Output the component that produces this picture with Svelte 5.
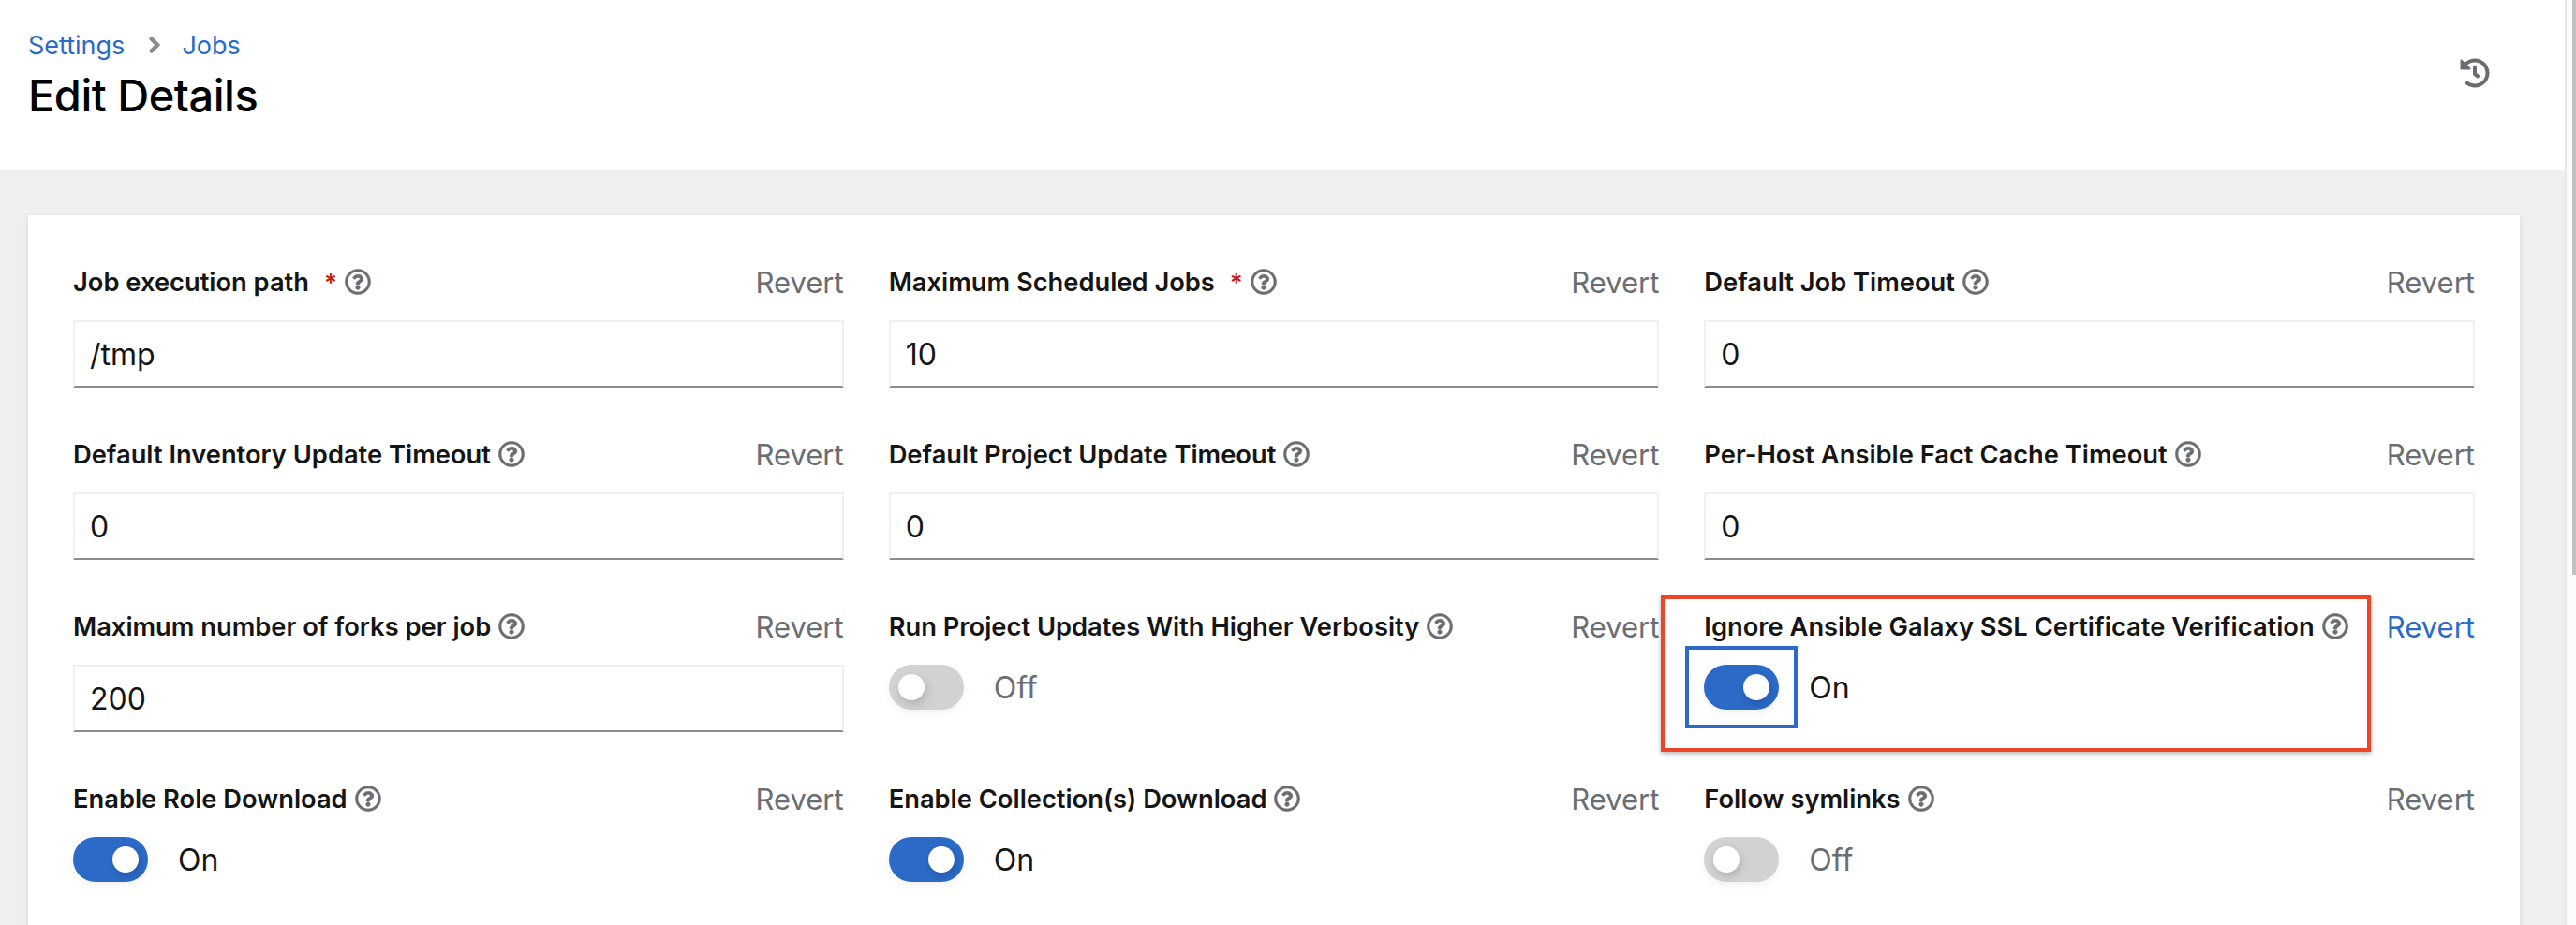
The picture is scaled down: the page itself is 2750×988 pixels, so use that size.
<script>
  const rows = [
    [
      { label: 'Job execution path', required: true, value: '/tmp' },
      { label: 'Maximum Scheduled Jobs', required: true, value: '10' },
      { label: 'Default Job Timeout', value: '0' }
    ],
    [
      { label: 'Default Inventory Update Timeout', value: '0' },
      { label: 'Default Project Update Timeout', value: '0' },
      { label: 'Per-Host Ansible Fact Cache Timeout', value: '0' }
    ],
    [
      { label: 'Maximum number of forks per job', value: '200' },
      { label: 'Run Project Updates With Higher Verbosity', on: false },
      { label: 'Ignore Ansible Galaxy SSL Certificate Verification', on: true, changed: true }
    ],
    [
      { label: 'Enable Role Download', on: true },
      { label: 'Enable Collection(s) Download', on: true },
      { label: 'Follow symlinks', on: false }
    ]
  ];
  const fields = rows.flat();
</script>

<div class="page">
  <main class="content">
    <header class="head">
      <div>
        <nav class="crumbs">
          <a href="#settings">Settings</a>
          <svg class="chev" viewBox="24 96 208 320" aria-hidden="true"><path d="M224.3 273l-136 136c-9.4 9.4-24.6 9.4-33.9 0l-22.6-22.6c-9.4-9.4-9.4-24.6 0-33.9l96.4-96.4-96.4-96.4c-9.4-9.4-9.4-24.6 0-33.9L54.3 103c9.4-9.4 24.6-9.4 33.9 0l136 136c9.5 9.4 9.5 24.6.1 34z"/></svg>
          <a href="#jobs">Jobs</a>
        </nav>
        <h1>Edit Details</h1>
      </div>
      <svg class="history" viewBox="0 0 512 512" aria-hidden="true"><path d="M504 255.5c.3 136.6-111.2 248.4-247.8 248.5-59 0-113.2-20.5-155.8-54.9-11.1-8.9-11.9-25.5-1.8-35.6l11.3-11.3c8.6-8.6 22.4-9.6 31.9-2 31.4 24.9 71.2 39.8 114.4 39.8 101.7 0 184-82.3 184-184 0-101.7-82.3-184-184-184-48.8 0-93.1 19-126.1 49.9l50.8 50.8c10.1 10.1 2.9 27.3-11.3 27.3H24c-8.8 0-16-7.2-16-16V38.6c0-14.3 17.2-21.4 27.3-11.3l49.4 49.4C129.2 34.1 189.4 8 256 8c136.6 0 247.7 110.9 248 247.5zm-180.9 78.8l9.8-12.6c8.1-10.5 6.3-25.5-4.2-33.7L288 256.3V152c0-13.3-10.7-24-24-24h-16c-13.3 0-24 10.7-24 24v135.7l65.4 50.9c10.5 8.1 25.5 6.3 33.7-4.3z"/></svg>
    </header>

    <section class="body">
      <form class="card">
        {#each fields as f}
          <div class="field" class:changed={f.changed}>
            <div class="top">
              <span class="label">{f.label}{#if f.required}<span class="req">*</span>{/if}</span>
              <svg class="help" viewBox="0 0 512 512" aria-hidden="true"><path d="M256 8C119 8 8 119 8 256s111 248 248 248 248-111 248-248S393 8 256 8zm0 448c-110.500 0-200-89.500-200-200S145.500 56 256 56s200 89.500 200 200-89.500 200-200 200zm107.200-255.200c0 67-72.400 68.100-72.400 92.900V300c0 6.600-5.400 12-12 12h-45.600c-6.600 0-12-5.400-12-12v-8.700c0-35.700 27.100-50 47.600-61.500 17.500-9.800 28.300-16.500 28.300-29.500 0-17.200-22-28.600-39.800-28.600-23.200 0-33.900 11-49 30-4.100 5.100-11.500 6.100-16.700 2.100l-27.800-21.100c-5.100-3.900-6.300-11.100-2.700-16.400C184.800 131.500 214.900 112 261.800 112c49.100 0 101.400 38.300 101.400 88.800zM298 368c0 23.200-18.800 42-42 42s-42-18.800-42-42 18.800-42 42-42 42 18.800 42 42z"/></svg>
              <span class="revert" class:active={f.changed}>Revert</span>
            </div>
            {#if f.value !== undefined}
              <div class="input">{f.value}</div>
            {:else}
              <div class="switch-row">
                <span class="focus" class:focused={f.changed}>
                  <span class="track" class:on={f.on}><span class="knob"></span></span>
                </span>
                <span class="state" class:off={!f.on}>{f.on ? 'On' : 'Off'}</span>
              </div>
            {/if}
          </div>
        {/each}
      </form>
    </section>
  </main>
  <aside class="scroll"><span class="thumb"></span></aside>
</div>

<style>
  :global(body) {
    margin: 0;
    overflow: hidden;
    background: #fff;
  }

  .page {
    display: flex;
    height: 988px;
    overflow: hidden;
    font-family: Inter, "Noto Sans", sans-serif;
    color: #151515;
  }

  .content {
    flex: 1;
    min-width: 0;
    background: #efefef;
  }

  .head {
    display: flex;
    justify-content: space-between;
    align-items: flex-start;
    height: 182px;
    box-sizing: border-box;
    padding: 30px 80px 0 30px;
    background: #fff;
  }

  .crumbs {
    display: flex;
    align-items: center;
    height: 36px;
    font-size: 27px;
  }

  .crumbs a {
    color: #2b6bc7;
    text-decoration: none;
  }

  .chev {
    width: 12px;
    height: 18px;
    margin: 0 23px 0 26px;
    fill: #8a8d90;
  }

  h1 {
    margin: 6px 0 0;
    font-size: 47px;
    font-weight: 500;
    line-height: 60px;
    color: #000;
    letter-spacing: -0.5px;
  }

  .history {
    width: 32px;
    height: 32px;
    margin-top: 32px;
    fill: #6a6e73;
  }

  .body {
    padding: 48px 48px 0 30px;
  }

  .card {
    display: grid;
    grid-template-columns: repeat(3, minmax(0, 1fr));
    grid-auto-rows: 130px;
    column-gap: 48px;
    row-gap: 54px;
    padding: 54px 48px 48px;
    background: #fff;
    box-shadow: 0 2px 6px rgba(3, 3, 3, 0.1);
  }

  .field {
    position: relative;
  }

  .field.changed::before {
    content: "";
    position: absolute;
    left: -46px;
    right: 111px;
    top: -16px;
    bottom: -21px;
    border: 4px solid #ee4428;
    box-shadow: 0 2px 5px rgba(0, 0, 0, 0.3);
    pointer-events: none;
  }

  .top {
    display: flex;
    align-items: center;
    height: 34px;
    margin-bottom: 24px;
  }

  .label {
    font-size: 27.3px;
    font-weight: 600;
    color: #151515;
    white-space: nowrap;
  }

  .req {
    margin-left: 16px;
    font-size: 26px;
    color: #c9190b;
  }

  .help {
    width: 28px;
    height: 28px;
    margin-left: 8px;
    fill: #6a6e73;
    stroke: #6a6e73;
    stroke-width: 10;
  }

  .revert {
    margin-left: auto;
    font-size: 31px;
    color: #6a6e73;
  }

  .revert.active {
    color: #2b6bc7;
  }

  .input {
    box-sizing: border-box;
    height: 72px;
    padding: 0 16px;
    font-size: 32px;
    line-height: 70px;
    border: 2px solid #f0f0f0;
    border-bottom-color: #8a8d90;
  }

  .switch-row {
    display: flex;
    align-items: center;
    height: 48px;
    margin-top: 2px;
  }

  .focus {
    display: block;
    position: relative;
    width: 80px;
    height: 48px;
  }

  .focus.focused::after {
    content: "";
    position: absolute;
    inset: -20px;
    border: 4px solid #2b6bc7;
  }

  .track {
    display: block;
    position: relative;
    width: 80px;
    height: 48px;
    border-radius: 24px;
    background: #d2d2d2;
    box-shadow: 0 4px 8px rgba(0, 0, 0, 0.05);
  }

  .track.on {
    background: #2b6bc7;
  }

  .knob {
    position: absolute;
    top: 10px;
    left: 10px;
    width: 28px;
    height: 28px;
    border-radius: 50%;
    background: #fff;
    box-shadow: 2px 4px 10px rgba(0, 0, 0, 0.16);
  }

  .track.on .knob {
    left: 42px;
  }

  .state {
    margin-left: 32px;
    font-size: 32px;
    color: #151515;
  }

  .state.off {
    color: #6a6e73;
  }

  .scroll {
    box-sizing: border-box;
    width: 12px;
    background: #fbfbfb;
    border-left: 2px solid #e8e8e8;
    display: flex;
    justify-content: flex-end;
  }

  .thumb {
    width: 4px;
    height: 614px;
    background: #c1c1c1;
  }
</style>
